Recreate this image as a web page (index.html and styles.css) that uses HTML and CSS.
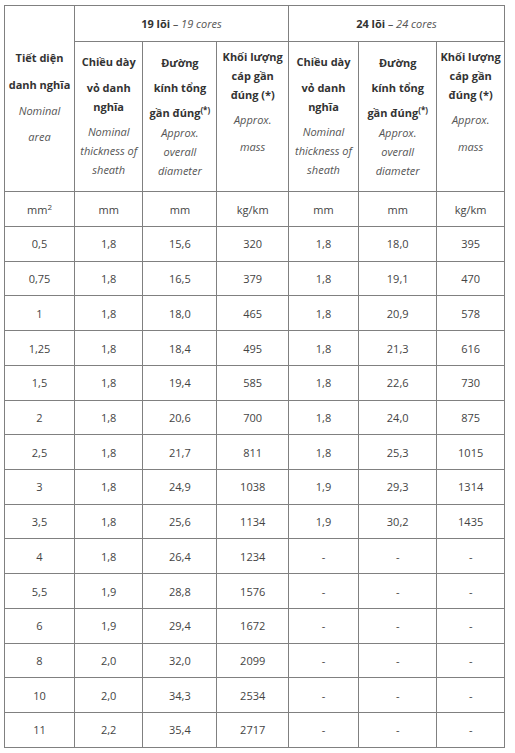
FILE: index.html
```html
<!DOCTYPE html>
<html lang="vi">
<head>
<meta charset="utf-8">
<title>Bảng thông số cáp</title>
<link rel="stylesheet" href="styles.css">
</head>
<body>
<table class="spec">
  <colgroup>
    <col class="c1"><col class="c2"><col class="c3"><col class="c4"><col class="c5"><col class="c6"><col class="c7">
  </colgroup>
  <thead>
    <tr class="r1">
      <th rowspan="2" class="h-area">
        <div class="b lh27">Tiết diện<br>danh nghĩa</div>
        <div class="i lh26">Nominal<br>area</div>
      </th>
      <th colspan="3" class="grp"><span class="b">19 lõi</span> <span class="i">– 19 cores</span></th>
      <th colspan="3" class="grp"><span class="b">24 lõi</span> <span class="i">– 24 cores</span></th>
    </tr>
    <tr class="r2">
      <th class="h-thick">
        <div class="b lh19">Chiều dày</div>
        <div class="b lh19 m7">vỏ danh<br>nghĩa</div>
        <div class="i lh19 m6">Nominal<br>thickness of<br>sheath</div>
      </th>
      <th class="h-diam">
        <div class="b lh25">Đường<br>kính tổng<br>gần đúng<sup>(*)</sup></div>
        <div class="i lh19 mneg2">Approx.<br>overall<br>diameter</div>
      </th>
      <th class="h-mass">
        <div class="b lh19">Khối lượng<br>cáp gần<br>đúng (*)</div>
        <div class="i lh27 m2">Approx.<br>mass</div>
      </th>
      <th class="h-thick">
        <div class="b lh19">Chiều dày</div>
        <div class="b lh19 m7">vỏ danh<br>nghĩa</div>
        <div class="i lh19 m6">Nominal<br>thickness of<br>sheath</div>
      </th>
      <th class="h-diam">
        <div class="b lh25">Đường<br>kính tổng<br>gần đúng<sup>(*)</sup></div>
        <div class="i lh19 mneg2">Approx.<br>overall<br>diameter</div>
      </th>
      <th class="h-mass">
        <div class="b lh19">Khối lượng<br>cáp gần<br>đúng (*)</div>
        <div class="i lh27 m2">Approx.<br>mass</div>
      </th>
    </tr>
  </thead>
  <tbody>
    <tr class="unit"><td>mm<sup>2</sup></td><td>mm</td><td>mm</td><td>kg/km</td><td>mm</td><td>mm</td><td>kg/km</td></tr>
    <tr><td>0,5</td><td>1,8</td><td>15,6</td><td>320</td><td>1,8</td><td>18,0</td><td>395</td></tr>
    <tr><td>0,75</td><td>1,8</td><td>16,5</td><td>379</td><td>1,8</td><td>19,1</td><td>470</td></tr>
    <tr><td>1</td><td>1,8</td><td>18,0</td><td>465</td><td>1,8</td><td>20,9</td><td>578</td></tr>
    <tr><td>1,25</td><td>1,8</td><td>18,4</td><td>495</td><td>1,8</td><td>21,3</td><td>616</td></tr>
    <tr><td>1,5</td><td>1,8</td><td>19,4</td><td>585</td><td>1,8</td><td>22,6</td><td>730</td></tr>
    <tr><td>2</td><td>1,8</td><td>20,6</td><td>700</td><td>1,8</td><td>24,0</td><td>875</td></tr>
    <tr><td>2,5</td><td>1,8</td><td>21,7</td><td>811</td><td>1,8</td><td>25,3</td><td>1015</td></tr>
    <tr><td>3</td><td>1,8</td><td>24,9</td><td>1038</td><td>1,9</td><td>29,3</td><td>1314</td></tr>
    <tr><td>3,5</td><td>1,8</td><td>25,6</td><td>1134</td><td>1,9</td><td>30,2</td><td>1435</td></tr>
    <tr><td>4</td><td>1,8</td><td>26,4</td><td>1234</td><td>-</td><td>-</td><td>-</td></tr>
    <tr><td>5,5</td><td>1,9</td><td>28,8</td><td>1576</td><td>-</td><td>-</td><td>-</td></tr>
    <tr><td>6</td><td>1,9</td><td>29,4</td><td>1672</td><td>-</td><td>-</td><td>-</td></tr>
    <tr><td>8</td><td>2,0</td><td>32,0</td><td>2099</td><td>-</td><td>-</td><td>-</td></tr>
    <tr><td>10</td><td>2,0</td><td>34,3</td><td>2534</td><td>-</td><td>-</td><td>-</td></tr>
    <tr><td>11</td><td>2,2</td><td>35,4</td><td>2717</td><td>-</td><td>-</td><td>-</td></tr>
  </tbody>
</table>
</body>
</html>
```
FILE: styles.css
```css
html, body {
  margin: 0;
  padding: 0;
  background: #ffffff;
}

body {
  font-family: "Open Sans", "Noto Sans", "Liberation Sans", sans-serif;
  font-size: 11px;
  color: #444444;
}

.spec {
  border-collapse: collapse;
  table-layout: fixed;
  width: 500px;
  margin: 5px 0 0 4px;
}

.c1 { width: 70px; }
.c2 { width: 68.4px; }
.c3 { width: 74px; }
.c4 { width: 71.6px; }
.c5 { width: 70px; }
.c6 { width: 78.4px; }
.c7 { width: 67.6px; }

.spec th,
.spec td {
  border: 1px solid #808080;
  padding: 0 2px;
  text-align: center;
  font-weight: normal;
  line-height: 19px;
}

.spec th {
  vertical-align: top;
}

.spec td {
  vertical-align: middle;
  height: 33.73px;
}

.r1 { height: 36px; }
.r2 { height: 150px; }
.spec .unit td { height: 34px; }

.spec th.grp {
  vertical-align: middle;
}

.b {
  font-weight: bold;
  color: #333333;
}

.i {
  font-style: italic;
  color: #555555;
}

.lh19 { line-height: 19px; }
.lh25 { line-height: 25px; }
.lh26 { line-height: 26px; }
.lh27 { line-height: 27px; }

.m7 { margin-top: 7px; }
.m6 { margin-top: 6px; }
.m2 { margin-top: 2px; }
.mneg2 { margin-top: -2px; }

.spec th.h-area { padding-top: 38px; }
.spec th.h-thick { padding-top: 10px; }
.spec th.h-diam { padding-top: 8px; }
.spec th.h-mass { padding-top: 5px; }

sup {
  font-size: 8px;
  line-height: 0;
  vertical-align: 4px;
}
```
